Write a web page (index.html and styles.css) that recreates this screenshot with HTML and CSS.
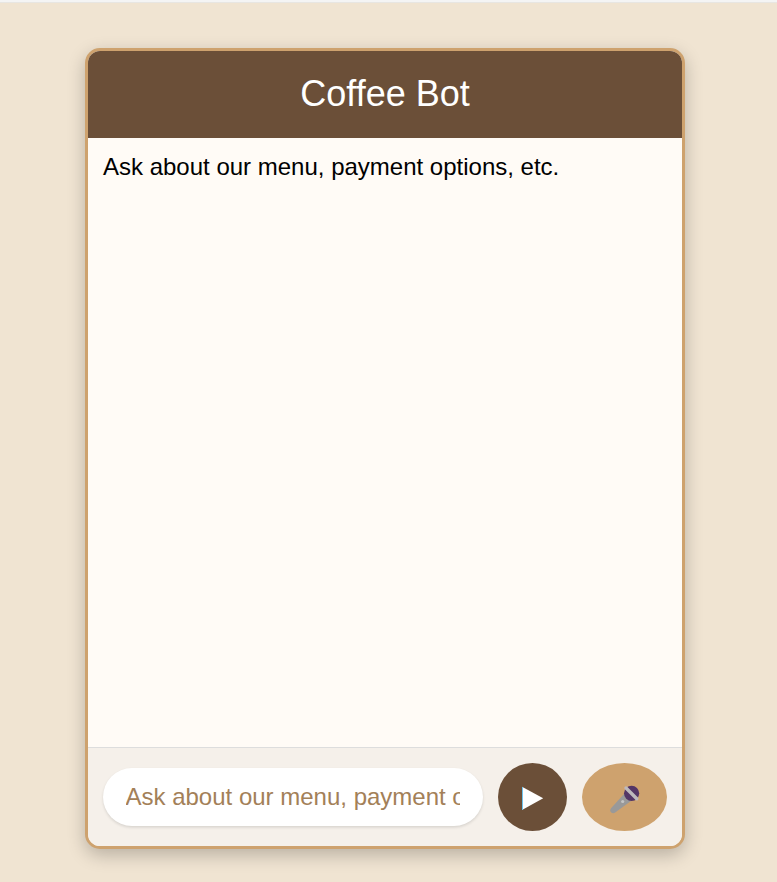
FILE: index.html
```html
<!DOCTYPE html>
<html lang="en">
<head>
<meta charset="utf-8">
<title>Coffee Bot</title>
<link rel="stylesheet" href="styles.css">
</head>
<body>
<main class="chat">
  <header class="chat-header">Coffee Bot</header>
  <section class="messages">Ask about our menu, payment options, etc.</section>
  <form class="composer">
    <input class="field" type="text" placeholder="Ask about our menu, payment options, etc.">
    <button class="send" type="button" aria-label="Send">
      <svg width="69" height="68" viewBox="0 0 69 68"><path d="M24 23.7L45.2 35.3L24 47Z" fill="#fff"/><path d="M24.5 24V47" stroke="#6fc4ee" stroke-width="1"/></svg>
    </button>
    <button class="mic" type="button" aria-label="Voice input">
      <svg width="85" height="68" viewBox="0 0 85 68">
        <path d="M42 31L49 38L33.5 49.3Q31.3 51 29.2 49.5Q27.3 47.5 29 45.2Z" fill="#999"/>
        <circle cx="49.6" cy="30.3" r="7.6" fill="#533566"/>
        <path d="M44 25L54.8 35.8" stroke="#bdb9bd" stroke-width="3.4" stroke-linecap="round"/>
        <circle cx="40.7" cy="38.5" r="1.6" fill="#c4c4c4"/>
      </svg>
    </button>
  </form>
</main>
</body>
</html>
```
FILE: styles.css
```css
* {
  box-sizing: border-box;
}

body {
  margin: 0;
  height: 882px;
  overflow: hidden;
  padding: 46px 0 0 85px;
  border-top: 2px solid #f4f4f4;
  background: #f0e4d2;
  box-shadow: inset 0 1px #e8e6e2;
  font-family: Arial, "Liberation Sans", sans-serif;
}

.chat {
  display: flex;
  flex-direction: column;
  width: 600px;
  height: 801px;
  overflow: hidden;
  border: 3px solid #cea26e;
  border-radius: 15px;
  background: #fffbf6;
  box-shadow: 0 6px 18px rgba(0, 0, 0, 0.23);
}

.chat-header {
  height: 87px;
  background: #6b4f38;
  color: #fff;
  font-size: 36px;
  line-height: 85px;
  text-align: center;
}

.messages {
  flex: 1;
  padding: 15px;
  font-size: 24px;
  line-height: 28px;
}

.composer {
  display: flex;
  align-items: center;
  gap: 15px;
  height: 99px;
  padding: 0 15px;
  border-top: 1px solid #ddd;
  background: #f5f0ea;
}

.field {
  width: 380px;
  height: 58px;
  padding: 0 23px 0 22.5px;
  border: 0;
  border-radius: 30px;
  background: #fff;
  box-shadow: 0 1.5px 3px rgba(0, 0, 0, 0.12);
  font: 24px Arial, "Liberation Sans", sans-serif;
}

.field::placeholder {
  color: #a38058;
  opacity: 1;
}

.send,
.mic {
  flex: none;
  height: 68px;
  padding: 0;
  border: 0;
  border-radius: 50%;
}

.send svg,
.mic svg {
  display: block;
}

.send {
  width: 69px;
  background: #6b4f38;
}

.mic {
  width: 85px;
  background: #cea26e;
}
```
